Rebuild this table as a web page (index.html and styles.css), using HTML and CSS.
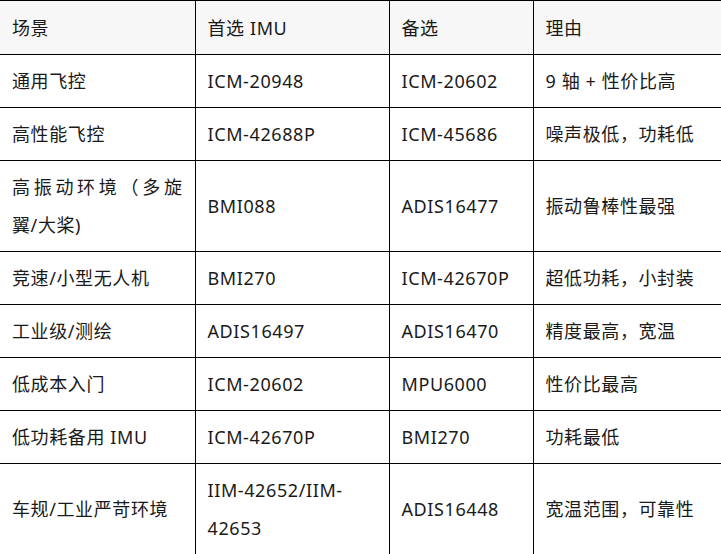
FILE: index.html
```
<!DOCTYPE html>
<html lang="zh">
<head>
<meta charset="utf-8">
<link rel="stylesheet" href="styles.css">
</head>
<body>
<table class="imu-table">
  <colgroup>
    <col class="c1"><col class="c2"><col class="c3"><col class="c4">
  </colgroup>
  <thead>
    <tr><th>场景</th><th>首选 IMU</th><th>备选</th><th>理由</th></tr>
  </thead>
  <tbody>
    <tr><td>通用飞控</td><td>ICM-20948</td><td>ICM-20602</td><td>9 轴 + 性价比高</td></tr>
    <tr><td>高性能飞控</td><td>ICM-42688P</td><td>ICM-45686</td><td>噪声极低，功耗低</td></tr>
    <tr><td>高振动环境（多旋翼/大桨)</td><td>BMI088</td><td>ADIS16477</td><td>振动鲁棒性最强</td></tr>
    <tr><td>竞速/小型无人机</td><td>BMI270</td><td>ICM-42670P</td><td>超低功耗，小封装</td></tr>
    <tr><td>工业级/测绘</td><td>ADIS16497</td><td>ADIS16470</td><td>精度最高，宽温</td></tr>
    <tr><td>低成本入门</td><td>ICM-20602</td><td>MPU6000</td><td>性价比最高</td></tr>
    <tr><td>低功耗备用 IMU</td><td>ICM-42670P</td><td>BMI270</td><td>功耗最低</td></tr>
    <tr><td>车规/工业严苛环境</td><td>IIM-42652/IIM-42653</td><td>ADIS16448</td><td>宽温范围，可靠性</td></tr>
  </tbody>
</table>
</body>
</html>
```
FILE: styles.css
```
html, body {
  margin: 0;
  padding: 0;
  background: #ffffff;
}
.imu-table {
  border-collapse: collapse;
  table-layout: fixed;
  width: 721px;
  font-family: "Noto Sans", "Noto Sans CJK SC", sans-serif;
  font-size: 18px;
  letter-spacing: 0.6px;
  color: #1a1a1a;
}
.c1 { width: 195px; }
.c2 { width: 194px; }
.c3 { width: 144px; }
.c4 { width: 188px; }
.imu-table th,
.imu-table td {
  border: 1px solid #000;
  padding: 7px 12px;
  line-height: 38px;
  text-align: justify;
  vertical-align: middle;
  font-weight: normal;
}
.imu-table th:first-child,
.imu-table td:first-child {
  border-left: none;
}
.imu-table thead th {
  background: #f7f7f7;
  height: 39px;
}
```
